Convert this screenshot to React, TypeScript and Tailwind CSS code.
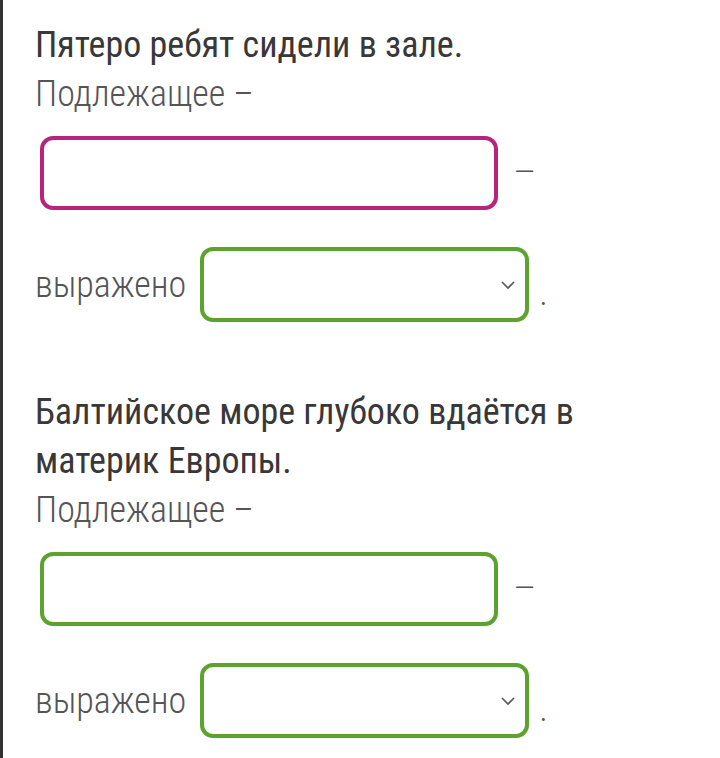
import React from "react";

function Chevron() {
  return (
    <svg width="16" height="10" viewBox="0 0 16 10" className="absolute right-[9px] top-1/2 -translate-y-1/2">
      <path d="M2 2 L8 8 L14 2" fill="none" stroke="#555" strokeWidth="1.6" />
    </svg>
  );
}

function Block({ title, color }: { title: React.ReactNode; color: string }) {
  return (
    <div>
      <div className="text-[36px] leading-[49px] text-[#383838] font-normal">{title}</div>
      <div className="text-[36px] leading-[49px] text-[#555] font-light">Подлежащее –</div>
      <div className="mt-[17px] flex items-center">
        <div className={`ml-[5px] h-[74px] w-[458px] rounded-[13px] border-[4px] ${color}`} />
        <span className="ml-[16px] text-[31px] font-light text-[#555]">—</span>
      </div>
      <div className="mt-[37px] flex items-center">
        <span className="text-[36px] font-light text-[#555]">выражено</span>
        <div className="relative ml-[14px] h-[75px] w-[329px] rounded-[13px] border-[4px] border-[#5ba22f]">
          <Chevron />
        </div>
        <span className="ml-[10px] mt-[16px] text-[36px] font-light text-[#555]">.</span>
      </div>
    </div>
  );
}

export default function App() {
  return (
    <div
      className="h-[758px] w-[720px] overflow-hidden bg-white border-l-[3px] border-[#333] pl-[32px] pt-[21px] font-stretch-condensed"
      style={{ fontFamily: "Roboto, 'Noto Sans', sans-serif" }}
    >
      <Block title="Пятеро ребят сидели в зале." color="border-[#b8247c]" />
      <div className="mt-[66px]">
        <Block
          title={
            <>
              Балтийское море глубоко вдаётся в
              <br />
              материк Европы.
            </>
          }
          color="border-[#5ba22f]"
        />
      </div>
    </div>
  );
}
